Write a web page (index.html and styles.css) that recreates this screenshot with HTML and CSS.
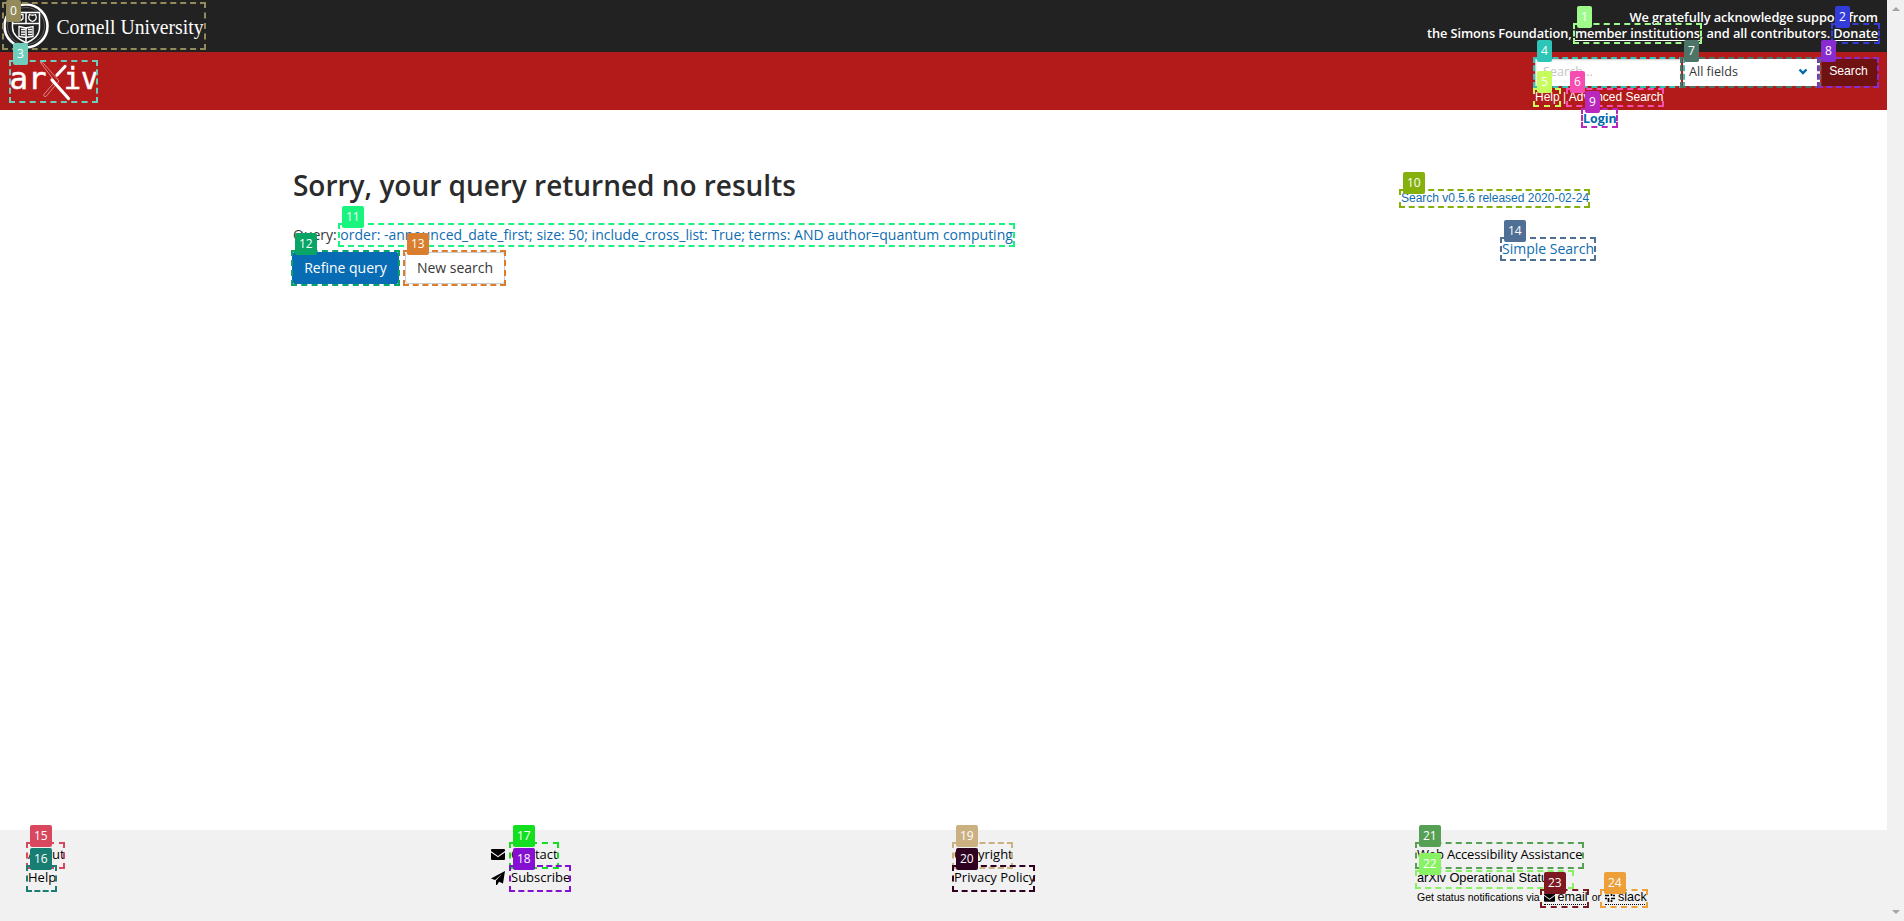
FILE: index.html
```
<!DOCTYPE html>
<html lang="en">
<head>
<meta charset="utf-8">
<title>Search | arXiv e-print repository</title>
<link rel="stylesheet" href="styles.css">
</head>
<body>
<div class="page">
  <header>
    <div class="topbar">
      <svg class="cornell" width="210" height="52" viewBox="0 0 210 52">
        <g fill="none" stroke="#fff">
          <circle cx="26" cy="26" r="21.5" stroke-width="2.6"/>
          <circle cx="26" cy="26" r="18.5" stroke-width=".5" stroke-opacity=".5"/>
          <path d="M12.500 12.500h27v15c0 8-6 12-13 15.500-8-3.500-14-8-14-15.500z" stroke-width="1.500"/>
          <path d="M12.500 23.500h27M26 12v11M26 27v15" stroke-width="1.500"/>
          <path d="M19 26.500l7 1.500 7-1.500v10l-7 1-7-1zM21 29.500h4M21 32h4M21 34.500h4M28 29.500h4M28 32h4M28 34.500h4" stroke-width="1.300"/>
          <path d="M29.500 14.500q3 1.500 6 0c2 4 0 6-3 7-3-1-5-3-3-7zM16 14.500h7v4q-3 4-7 0z" stroke-width="1.300"/>
        </g>
        <text x="56.500" y="33.500" textLength="147" lengthAdjust="spacingAndGlyphs">Cornell University</text>
      </svg>
      <p class="thanks">We gratefully acknowledge support from<br>the Simons Foundation, <a>member institutions</a>, and all contributors. <a>Donate</a></p>
    </div>
    <div class="brandbar">
      <svg class="arxiv" width="92" height="43" viewBox="9 60 92 43">
        <text x="9.500" y="89" textLength="37" lengthAdjust="spacingAndGlyphs">ar</text>
        <text x="64" y="89" textLength="34" lengthAdjust="spacingAndGlyphs">iv</text>
        <path d="M40.500 62.500q2-.5 3.500 1.500L59 81 46 96.500q-2 .5-2.500-1.500L55 81.500z" fill="#b31b1b" stroke="#e5a6a6" stroke-width=".8"/>
        <path d="M65 66.500l-8 8.500M52 80l16.500 18.500" stroke="#fff" stroke-width="3.200" stroke-linecap="round"/>
      </svg>
      <div class="finder">
        <div class="fields">
          <span class="input">Search...</span>
          <span class="select">All fields<svg width="10" height="7" viewBox="0 0 10 7"><path d="M1.500 1.500L5 5l3.500-3.500" fill="none" stroke="#0068ac" stroke-width="2.400"/></svg></span>
          <span class="go">Search</span>
        </div>
        <p class="help"><a>Help</a> | <a>Advanced Search</a></p>
      </div>
    </div>
    <div class="user"><a>Login</a></div>
  </header>
  <main>
    <section class="result">
      <h1>Sorry, your query returned no results</h1>
      <p class="query"><span>Query: </span><a>order: -announced_date_first; size: 50; include_cross_list: True; terms: AND author=quantum computing</a></p>
      <div class="buttons"><a class="button primary">Refine query</a><a class="button">New search</a></div>
    </section>
    <aside>
      <a class="release">Search v0.5.6 released 2020-02-24</a>
      <a class="simple">Simple Search</a>
    </aside>
  </main>
  <footer>
    <ul class="col about"><li>About</li><li>Help</li></ul>
    <ul class="col contact">
      <li><svg width="14" height="11" viewBox="0 0 14 11"><path d="M1 0h12q1 0 1 1v1L7 7 0 2V1q0-1 1-1zM0 3.400L7 8.300l7-4.900V10q0 1-1 1H1q-1 0-1-1z"/></svg>Contact</li>
      <li><svg width="14" height="14" viewBox="0 0 14 14"><path d="M14 0l-2 12.500-4-1.700L6 14H5v-4.500L11 3 4 9 0 7.500z"/></svg>Subscribe</li>
    </ul>
    <ul class="col legal"><li>Copyright</li><li>Privacy Policy</li></ul>
    <div class="col status">
      <p class="web">Web Accessibility Assistance</p>
      <p class="op">arXiv Operational Status</p>
      <p class="get"><span class="via">Get status notifications via</span>
        <a class="email"><svg width="11" height="9" viewBox="0 0 14 11"><path d="M1 0h12q1 0 1 1v1L7 7 0 2V1q0-1 1-1zM0 3.400L7 8.300l7-4.900V10q0 1-1 1H1q-1 0-1-1z"/></svg>email</a>
        <span class="or">or</span>
        <a class="slack"><svg width="10" height="10" viewBox="0 0 10 10"><path d="M0 3.500h4M3.500 0v2M6.500 0v4M8 3.500h2M6 6.500h4M6.500 8v2M3.500 6v4M0 6.500h2" fill="none" stroke="#000" stroke-width="1.700"/></svg>slack</a></p>
    </div>
  </footer>
</div>
<div class="scrollbar"><i class="up"></i><i class="down"></i></div>
<div class="overlay">
  <div class="mark m0"><b>0</b></div><div class="mark m1"><b>1</b></div><div class="mark m2"><b>2</b></div>
  <div class="mark m3"><b>3</b></div><div class="mark m4"><b>4</b></div><div class="mark m5"><b>5</b></div>
  <div class="mark m6"><b>6</b></div><div class="mark m7"><b>7</b></div><div class="mark m8"><b>8</b></div>
  <div class="mark m9"><b>9</b></div><div class="mark m10"><b>10</b></div><div class="mark m11"><b>11</b></div>
  <div class="mark m12"><b>12</b></div><div class="mark m13"><b>13</b></div><div class="mark m14"><b>14</b></div>
  <div class="mark m15"><b>15</b></div><div class="mark m16"><b>16</b></div><div class="mark m17"><b>17</b></div>
  <div class="mark m18"><b>18</b></div><div class="mark m19"><b>19</b></div><div class="mark m20"><b>20</b></div>
  <div class="mark m21"><b>21</b></div><div class="mark m22"><b>22</b></div><div class="mark m23"><b>23</b></div>
  <div class="mark m24"><b>24</b></div>
</div>
</body>
</html>
```
FILE: styles.css
```
* { box-sizing: border-box; }
body { margin: 0; width: 1904px; height: 921px; overflow: hidden; display: flex; position: relative; background: #fff; color: #363636; font-family: "Open Sans", "Liberation Sans", sans-serif; font-size: 14px; }
p, h1, ul { margin: 0; padding: 0; list-style: none; font-weight: 400; }
.page { width: 1887px; height: 921px; display: flex; flex-direction: column; white-space: nowrap; }
.topbar { height: 52px; background: #222; display: flex; justify-content: space-between; }
.cornell text { font: 22px "Liberation Serif", serif; fill: #fff; }
.thanks { padding: 9px 9px 0 0; text-align: right; color: #fff; font-size: 12.8px; font-weight: 600; line-height: 16px; letter-spacing: -.085px; }
.thanks a { text-decoration: underline; text-underline-offset: 2px; }
.brandbar { height: 58px; background: #b31b1b; display: flex; justify-content: space-between; }
.arxiv { margin: 8px 0 0 9px; }
.arxiv text { font: 30px "DejaVu Sans Mono", monospace; fill: #fff; stroke: #fff; stroke-width: .5px; }
.finder { width: 352px; padding-top: 7px; }
.fields { display: flex; height: 27px; font-size: 12.6px; line-height: 25px; }
.input { width: 146px; background: #fff; color: #c4c4c4; padding-left: 7px; border-left: 1px solid #ccc; box-shadow: inset 0 1px 2px rgba(0,0,0,.2); }
.select { width: 137px; margin-left: 2px; background: #fff; padding: 0 12px 2px 6px; display: flex; justify-content: space-between; align-items: center; }
.go { width: 56px; margin-left: 2px; padding-right: 3px; background: #701112; color: #fff; font: 12.2px/24px "Liberation Sans", sans-serif; text-align: center; border-radius: 0 2px 2px 0; }
.help { color: #fff; font: 12px/16px "Liberation Sans", sans-serif; padding: 3px 0 0; }
.user { height: 20px; padding: 1px 0 0 1583px; line-height: 16px; font-size: 12.4px; font-weight: 700; color: #0068ac; }
main { flex: 1; display: flex; padding-left: 293px; }
.result { width: 1108px; padding-top: 32px; }
h1 { font-size: 28px; line-height: 46px; font-weight: 600; color: #2b2b2b; letter-spacing: -.02px; }
.query { margin-top: 16px; font-size: 14px; line-height: 22px; letter-spacing: -.005px; }
.query a, aside { color: #0f6cb0; }
.buttons { display: flex; gap: 6px; margin: 6px 0 0 -1px; }
.button { height: 32px; width: 100px; border: 1px solid #ccc; border-radius: 3px; text-align: center; line-height: 29px; font-size: 14px; }
.button.primary { width: 107px; background: #076cb3; border-color: #076cb3; color: #fff; }
aside { display: flex; flex-direction: column; padding-top: 59px; }
.release { font: 12px/18px "Liberation Sans", sans-serif; }
.simple { padding-left: 101px; margin-top: 31px; font-size: 14px; line-height: 22px; }
footer { height: 91px; background: #f1f1f1; color: #000; display: flex; padding: 13px 0 0 28px; font-size: 13px; line-height: 23px; }
.about { width: 463px; }
.contact { width: 463px; }
.contact li { display: flex; align-items: center; gap: 6px; }
.legal { width: 463px; }
.web { letter-spacing: -.17px; }
.op { font: 12.8px/23px "Liberation Sans", sans-serif; letter-spacing: -.05px; }
.get { display: flex; align-items: center; height: 17px; font: 10.5px/17px "Liberation Sans", sans-serif; }
.get a { display: flex; align-items: center; gap: 3px; height: 15px; font-size: 12.6px; border-bottom: 1px dotted #000; }
.email { margin-left: 4px; }
.or { margin: 0 4px; }
.scrollbar { width: 17px; height: 921px; background: #f1f1f1; display: flex; flex-direction: column; justify-content: space-between; align-items: center; padding: 7px 0; }
.scrollbar i { border: 4px solid transparent; }
.scrollbar .up { border-top: 0; border-bottom-color: #a3a3a3; }
.scrollbar .down { border-bottom: 0; border-top-color: #a3a3a3; }
.overlay { position: absolute; inset: 0; }
.mark { position: absolute; border: 2px dashed var(--c); }
.mark b { position: absolute; left: 2px; top: -19px; height: 22px; padding: 0 4px; border-radius: 2px; background: var(--c); color: #fff; font-weight: 400; font-size: 12px; line-height: 21px; }
.m0 { --c: #948b5c; left: 2px; top: 2px; width: 204px; height: 48px; }
.mark.m0 b { top: -4px; }
.m1 { --c: #9ffa8c; left: 1573px; top: 23px; width: 129px; height: 21px; }
.m2 { --c: #333bd8; left: 1831px; top: 23px; width: 49px; height: 21px; }
.m3 { --c: #6fcdbb; left: 9px; top: 60px; width: 89px; height: 43px; }
.m4 { --c: #2dc5b7; left: 1533px; top: 57px; width: 152px; height: 31px; }
.m5 { --c: #c6fd5c; left: 1533px; top: 88px; width: 28px; height: 19px; }
.m6 { --c: #f74db0; left: 1566px; top: 88px; width: 98px; height: 19px; }
.m7 { --c: #4c7567; left: 1680px; top: 57px; width: 141px; height: 31px; }
.m8 { --c: #882bd0; left: 1817px; top: 57px; width: 62px; height: 31px; }
.m9 { --c: #b927bd; left: 1581px; top: 108px; width: 37px; height: 20px; }
.m10 { --c: #86b10c; left: 1399px; top: 189px; width: 191px; height: 19px; }
.m11 { --c: #18f47e; left: 338px; top: 223px; width: 677px; height: 24px; }
.m12 { --c: #08a567; left: 291px; top: 250px; width: 109px; height: 36px; }
.m13 { --c: #d97d2e; left: 403px; top: 250px; width: 103px; height: 36px; }
.m14 { --c: #4f7094; left: 1500px; top: 237px; width: 96px; height: 24px; }
.m15 { --c: #d9475f; left: 26px; top: 842px; width: 39px; height: 27px; }
.m16 { --c: #187d72; left: 26px; top: 865px; width: 31px; height: 27px; }
.m17 { --c: #13df20; left: 509px; top: 842px; width: 50px; height: 27px; }
.m18 { --c: #8510d2; left: 509px; top: 865px; width: 62px; height: 27px; }
.m19 { --c: #cbb182; left: 952px; top: 842px; width: 61px; height: 27px; }
.m20 { --c: #300222; left: 952px; top: 865px; width: 83px; height: 27px; }
.m21 { --c: #55a054; left: 1415px; top: 842px; width: 169px; height: 27px; }
.m22 { --c: #89f164; left: 1415px; top: 870px; width: 159px; height: 19px; }
.m23 { --c: #7e1821; left: 1540px; top: 889px; width: 49px; height: 19px; }
.m24 { --c: #eda038; left: 1600px; top: 889px; width: 48px; height: 19px; }
```
